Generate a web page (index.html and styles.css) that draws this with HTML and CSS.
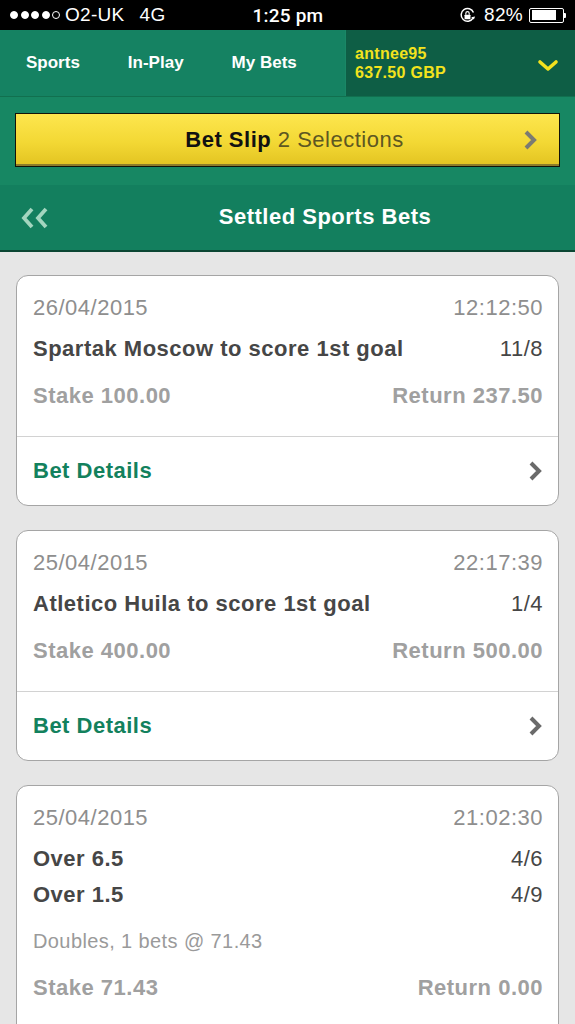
FILE: index.html
```html
<!DOCTYPE html>
<html lang="en">
<head>
<meta charset="utf-8">
<title>Settled Sports Bets</title>
<link rel="stylesheet" href="styles.css">
</head>
<body>
<div class="statusbar">
  <div class="sb-left">
    <span class="signal"><i class="dot on"></i><i class="dot on"></i><i class="dot on"></i><i class="dot on"></i><i class="dot"></i></span>
    <span class="carrier">O2-UK</span>
    <span class="net">4G</span>
  </div>
  <div class="sb-time">1:25 pm</div>
  <div class="sb-right">
    <svg class="rotlock" width="17" height="17" viewBox="0 0 16 16">
      <path d="M13.2 10.5 A6 6 0 1 1 13.6 5.2" fill="none" stroke="#fff" stroke-width="1.4"/>
      <path d="M11.4 9.6 L14 11.8 L15.2 8.9 Z" fill="#fff"/>
      <rect x="5.2" y="7.2" width="5.6" height="4.3" rx="0.6" fill="#fff"/>
      <path d="M6.4 7.4 V6 a1.6 1.6 0 0 1 3.2 0 V7.4" fill="none" stroke="#fff" stroke-width="1.1"/>
    </svg>
    <span class="pct">82%</span>
    <span class="battery"><span class="level"></span></span><span class="nub"></span>
  </div>
</div>

<nav class="topnav">
  <div class="tabs">
    <a class="tab">Sports</a>
    <a class="tab">In-Play</a>
    <a class="tab">My Bets</a>
  </div>
  <div class="account">
    <div class="acct-text">
      <div>antnee95</div>
      <div>637.50 GBP</div>
    </div>
    <svg class="acct-chev" width="22" height="13" viewBox="0 0 22 13">
      <polyline points="3,3 11,10 19,3" fill="none" stroke="#f2e21e" stroke-width="3.6" stroke-linecap="round" stroke-linejoin="round"/>
    </svg>
  </div>
</nav>

<div class="slipbar">
  <div class="betslip">
    <span class="slip-label"><b>Bet Slip</b> 2 Selections</span>
    <svg class="slip-chev" width="15" height="22" viewBox="0 0 15 22">
      <polyline points="3,3 11,11 3,19" fill="none" stroke="#7b7b72" stroke-width="4"/>
    </svg>
  </div>
</div>

<header class="pagehead">
  <a class="back">
    <svg width="30" height="24" viewBox="0 0 30 24">
      <polyline points="11,3 3,12 11,21" fill="none" stroke="#a3d6bf" stroke-width="3.8"/>
      <polyline points="25,3 17,12 25,21" fill="none" stroke="#a3d6bf" stroke-width="3.8"/>
    </svg>
  </a>
  <h1 class="title">Settled Sports Bets</h1>
</header>

<main class="bets">
  <section class="card">
    <div class="card-body">
      <div class="row meta"><span>26/04/2015</span><span>12:12:50</span></div>
      <div class="selections">
        <div class="row sel"><span class="name">Spartak Moscow to score 1st goal</span><span class="odds">11/8</span></div>
      </div>
      <div class="row money"><span>Stake 100.00</span><span>Return 237.50</span></div>
    </div>
    <a class="details">Bet Details
      <svg width="15" height="22" viewBox="0 0 15 22"><polyline points="3,3 11,11 3,19" fill="none" stroke="#6a6a6a" stroke-width="4"/></svg>
    </a>
  </section>

  <section class="card">
    <div class="card-body">
      <div class="row meta"><span>25/04/2015</span><span>22:17:39</span></div>
      <div class="selections">
        <div class="row sel"><span class="name">Atletico Huila to score 1st goal</span><span class="odds">1/4</span></div>
      </div>
      <div class="row money"><span>Stake 400.00</span><span>Return 500.00</span></div>
    </div>
    <a class="details">Bet Details
      <svg width="15" height="22" viewBox="0 0 15 22"><polyline points="3,3 11,11 3,19" fill="none" stroke="#6a6a6a" stroke-width="4"/></svg>
    </a>
  </section>

  <section class="card">
    <div class="card-body">
      <div class="row meta"><span>25/04/2015</span><span>21:02:30</span></div>
      <div class="selections">
        <div class="row sel"><span class="name">Over 6.5</span><span class="odds">4/6</span></div>
        <div class="row sel"><span class="name">Over 1.5</span><span class="odds">4/9</span></div>
      </div>
      <div class="row note">Doubles, 1 bets @ 71.43</div>
      <div class="row money"><span>Stake 71.43</span><span>Return 0.00</span></div>
    </div>
    <a class="details">Bet Details
      <svg width="15" height="22" viewBox="0 0 15 22"><polyline points="3,3 11,11 3,19" fill="none" stroke="#6a6a6a" stroke-width="4"/></svg>
    </a>
  </section>
</main>
</body>
</html>
```

FILE: styles.css
```css
* { box-sizing: border-box; }

body {
  margin: 0;
  font-family: "Liberation Sans", Arial, sans-serif;
  background: #e6e6e6;
  overflow: hidden;
}

/* ---- phone status bar ---- */
.statusbar {
  height: 30px;
  background: #000;
  color: #fff;
  display: grid;
  grid-template-columns: 1fr auto 1fr;
  align-items: center;
  font-size: 19px;
  letter-spacing: 0.3px;
  padding: 0 9px 0 10px;
}
.sb-left { display: flex; align-items: center; }
.signal { display: flex; gap: 2.5px; margin-right: 5px; }
.dot {
  width: 8px; height: 8px; border-radius: 50%;
  border: 1px solid #fff;
}
.dot.on { background: #fff; }
.net { margin-left: 15px; }
.sb-time { font-family: Roboto, "Liberation Sans", sans-serif; font-weight: 500; font-size: 19px; letter-spacing: 0.2px; }
.sb-right { display: flex; align-items: center; justify-content: flex-end; }
.rotlock { margin-right: 8px; }
.pct { margin-right: 6px; }
.battery {
  width: 35px; height: 15px;
  border: 1.5px solid #fff;
  border-radius: 2px;
  padding: 1.5px;
  display: flex;
}
.battery .level { width: 82%; background: #fff; }
.nub { width: 2px; height: 5px; background: #fff; border-radius: 0 1px 1px 0; }

/* ---- top navigation ---- */
.topnav {
  height: 67px;
  display: flex;
  background: #158262;
  border-bottom: 1px solid #11704f;
}
.tabs {
  width: 345px;
  display: flex;
  align-items: center;
  gap: 48px;
  padding-left: 26px;
  color: #fff;
  font-weight: bold;
  font-size: 17px;
}
.account {
  flex: 1;
  display: flex;
  align-items: center;
  justify-content: space-between;
  padding: 0 16px 0 9px;
  background: #0e5e45;
  border-left: 1px solid #1a8766;
  color: #f3e31d;
  font-weight: bold;
  font-size: 16px;
  letter-spacing: 0.3px;
  line-height: 19px;
}
.acct-chev { margin-top: 4px; }

/* ---- bet slip strip ---- */
.slipbar {
  height: 88px;
  background: #178763;
  padding: 16px 15px 18px;
}
.betslip {
  height: 54px;
  border: 1px solid #121208;
  background: linear-gradient(#fde64e, #f3d834 55%, #e2c321);
  box-shadow: inset 0 -2px 0 #8d7c2a;
  display: flex;
  align-items: center;
  justify-content: center;
  position: relative;
  font-size: 22px;
  letter-spacing: 0.5px;
  color: #5d5722;
  padding-left: 14px;
}
.betslip b { color: #111; }
.slip-chev { position: absolute; right: 21px; top: 15px; }

/* ---- page heading ---- */
.pagehead {
  height: 67px;
  display: flex;
  align-items: center;
  background: #137f5e;
  border-bottom: 2px solid #0b4633;
}
.back { width: 75px; padding-left: 21px; display: flex; align-items: center; }
.title {
  flex: 1;
  margin: 0;
  text-align: center;
  color: #fff;
  font-size: 22px;
  letter-spacing: 0.5px;
  font-weight: bold;
  padding-bottom: 2px;
}

/* ---- settled bet cards ---- */
.bets {
  padding: 23px 16px 16px;
  display: flex;
  flex-direction: column;
  gap: 24px;
}
.card {
  background: #fff;
  border: 1px solid #a5a5a5;
  border-radius: 12px;
}
.card-body {
  padding: 14px 15px 22px 16px;
  border-bottom: 1px solid #d2d2d2;
}
.row {
  display: flex;
  justify-content: space-between;
  align-items: center;
  height: 36px;
  font-size: 22px;
  letter-spacing: 0.5px;
}
.meta { color: #8e8e8e; }
.selections { margin-top: 5px; }
.sel { color: #464646; }
.sel .name { font-weight: bold; }
.note { margin-top: 10px; font-size: 20px; letter-spacing: 0.4px; color: #9a9a9a; }
.money { margin-top: 11px; color: #a0a0a0; font-weight: bold; }
.details {
  height: 68px;
  display: flex;
  align-items: center;
  justify-content: space-between;
  padding: 0 15px 0 16px;
  color: #13815d;
  font-weight: bold;
  font-size: 22px;
  letter-spacing: 0.5px;
}
```
